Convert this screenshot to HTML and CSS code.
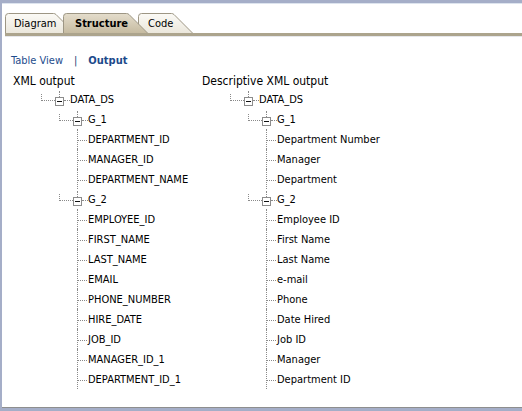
FILE: index.html
```html
<!DOCTYPE html>
<html>
<head>
<meta charset="utf-8">
<link rel="stylesheet" href="styles.css">
</head>
<body>
<div class="frame">
  <div class="panel">
    <div class="tabs">
      <div class="tab tab-diagram">
        <svg class="tab-bg" width="70" height="20" viewBox="0 0 70 20"><defs><linearGradient id="gu" x1="0" y1="0" x2="0" y2="1"><stop offset="0" stop-color="#fbfaf6"/><stop offset="1" stop-color="#ebe7dc"/></linearGradient></defs><path d="M0.5,20 V3.5 Q0.5,0.5 3.5,0.5 H48.5 Q50,0.5 51,1.5 L69.5,20 Z" fill="url(#gu)"/><path d="M0.5,20 V3.5 Q0.5,0.5 3.5,0.5 H48.5 Q50,0.5 51,1.5 L69.5,20" fill="none" stroke="#9d9684"/></svg>
        <span class="tab-label">Diagram</span>
      </div>
      <div class="tab tab-structure">
        <svg class="tab-bg" width="85" height="20" viewBox="0 0 85 20"><defs><linearGradient id="gs" x1="0" y1="0" x2="0" y2="1"><stop offset="0" stop-color="#e4ddcc"/><stop offset="1" stop-color="#c6bba1"/></linearGradient></defs><path d="M0.5,20 V3.5 Q0.5,0.5 3.5,0.5 H63.5 Q65,0.5 66,1.5 L84.5,20 Z" fill="url(#gs)"/><path d="M0.5,20 V3.5 Q0.5,0.5 3.5,0.5 H63.5 Q65,0.5 66,1.5 L84.5,20" fill="none" stroke="#9d9684"/></svg>
        <span class="tab-label">Structure</span>
      </div>
      <div class="tab tab-code">
        <svg class="tab-bg" width="55" height="20" viewBox="0 0 55 20"><defs><linearGradient id="gc" x1="0" y1="0" x2="0" y2="1"><stop offset="0" stop-color="#fbfaf6"/><stop offset="1" stop-color="#ebe7dc"/></linearGradient></defs><path d="M0.5,20 V3.5 Q0.5,0.5 3.5,0.5 H33.5 Q35,0.5 36,1.5 L54.5,20 Z" fill="url(#gc)"/><path d="M0.5,20 V3.5 Q0.5,0.5 3.5,0.5 H33.5 Q35,0.5 36,1.5 L54.5,20" fill="none" stroke="#9d9684"/></svg>
        <span class="tab-label">Code</span>
      </div>
    </div>
    <div class="tabbar"></div>

    <div class="links">
      <span class="link">Table View</span>
      <span class="sep">|</span>
      <span class="link active">Output</span>
    </div>

    <div class="columns">
      <div class="col col-left">
        <div class="heading">XML output</div>
        <div class="tree">
          <div class="row folder lvl0"><span class="elbow"></span><span class="boxwrap"><span class="boxstub"></span><span class="box"></span></span><span class="link-line"></span><span class="label">DATA_DS</span></div>
          <div class="row folder lvl1"><span class="elbow"></span><span class="boxwrap"><span class="boxstub"></span><span class="box"></span></span><span class="link-line"></span><span class="label">G_1</span></div>
          <div class="row leaf"><span class="leafline"><span class="h"></span></span><span class="label">DEPARTMENT_ID</span></div>
          <div class="row leaf"><span class="leafline"><span class="h"></span></span><span class="label">MANAGER_ID</span></div>
          <div class="row leaf"><span class="leafline"><span class="h"></span></span><span class="label">DEPARTMENT_NAME</span></div>
          <div class="row folder lvl1"><span class="elbow"></span><span class="boxwrap"><span class="boxstub"></span><span class="box"></span></span><span class="link-line"></span><span class="label">G_2</span></div>
          <div class="row leaf"><span class="leafline"><span class="h"></span></span><span class="label">EMPLOYEE_ID</span></div>
          <div class="row leaf"><span class="leafline"><span class="h"></span></span><span class="label">FIRST_NAME</span></div>
          <div class="row leaf"><span class="leafline"><span class="h"></span></span><span class="label">LAST_NAME</span></div>
          <div class="row leaf"><span class="leafline"><span class="h"></span></span><span class="label">EMAIL</span></div>
          <div class="row leaf"><span class="leafline"><span class="h"></span></span><span class="label">PHONE_NUMBER</span></div>
          <div class="row leaf"><span class="leafline"><span class="h"></span></span><span class="label">HIRE_DATE</span></div>
          <div class="row leaf"><span class="leafline"><span class="h"></span></span><span class="label">JOB_ID</span></div>
          <div class="row leaf"><span class="leafline"><span class="h"></span></span><span class="label">MANAGER_ID_1</span></div>
          <div class="row leaf"><span class="leafline"><span class="h"></span></span><span class="label">DEPARTMENT_ID_1</span></div>
        </div>
      </div>
      <div class="col col-right">
        <div class="heading">Descriptive XML output</div>
        <div class="tree">
          <div class="row folder lvl0"><span class="elbow"></span><span class="boxwrap"><span class="boxstub"></span><span class="box"></span></span><span class="link-line"></span><span class="label">DATA_DS</span></div>
          <div class="row folder lvl1"><span class="elbow"></span><span class="boxwrap"><span class="boxstub"></span><span class="box"></span></span><span class="link-line"></span><span class="label">G_1</span></div>
          <div class="row leaf"><span class="leafline"><span class="h"></span></span><span class="label">Department Number</span></div>
          <div class="row leaf"><span class="leafline"><span class="h"></span></span><span class="label">Manager</span></div>
          <div class="row leaf"><span class="leafline"><span class="h"></span></span><span class="label">Department</span></div>
          <div class="row folder lvl1"><span class="elbow"></span><span class="boxwrap"><span class="boxstub"></span><span class="box"></span></span><span class="link-line"></span><span class="label">G_2</span></div>
          <div class="row leaf"><span class="leafline"><span class="h"></span></span><span class="label">Employee ID</span></div>
          <div class="row leaf"><span class="leafline"><span class="h"></span></span><span class="label">First Name</span></div>
          <div class="row leaf"><span class="leafline"><span class="h"></span></span><span class="label">Last Name</span></div>
          <div class="row leaf"><span class="leafline"><span class="h"></span></span><span class="label">e-mail</span></div>
          <div class="row leaf"><span class="leafline"><span class="h"></span></span><span class="label">Phone</span></div>
          <div class="row leaf"><span class="leafline"><span class="h"></span></span><span class="label">Date Hired</span></div>
          <div class="row leaf"><span class="leafline"><span class="h"></span></span><span class="label">Job ID</span></div>
          <div class="row leaf"><span class="leafline"><span class="h"></span></span><span class="label">Manager</span></div>
          <div class="row leaf"><span class="leafline"><span class="h"></span></span><span class="label">Department ID</span></div>
        </div>
      </div>
    </div>
  </div>
</div>
</body>
</html>
```

FILE: styles.css
```css
* { box-sizing: border-box; }
html, body { margin: 0; padding: 0; background: #ffffff; }
body {
  font-family: "DejaVu Sans Condensed", "DejaVu Sans", sans-serif;
  font-stretch: condensed;
  font-size: 11px;
  color: #000;
}
.frame {
  width: 522px;
  height: 411px;
  border-top: 3px solid #a5aec8;
  border-left: 2px solid #a5aec8;
  border-bottom: 3px solid #a5aec8;
  display: flex;
  flex-direction: column;
}
.panel {
  flex: 1;
  background: #fff;
  border-top: 1px solid #dde4ee;
  border-bottom: 1px solid #8e8e8e;
  display: flex;
  flex-direction: column;
}
.tabs {
  display: flex;
  margin-top: 9px;
  padding-left: 3px;
  height: 20px;
}
.tab {
  position: relative;
  height: 20px;
  line-height: 20px;
  flex: none;
  z-index: 1;
}
.tab-bg { position: absolute; left: 0; top: 0; display: block; }
.tab-label { position: relative; display: block; padding-top: 1px; }
.tab-diagram { width: 70px; padding-left: 9px; }
.tab-structure { width: 85px; padding-left: 12px; margin-left: -12px; z-index: 3; font-weight: bold; }
.tab-code { width: 55px; padding-left: 10px; margin-left: -10px; }
.tabbar {
  margin-left: 3px;
  height: 4px;
  background: #aca48d;
  border-bottom: 1px solid #e6e7eb;
}
.links {
  margin-top: 15px;
  padding-top: 1px;
  padding-left: 9px;
  line-height: 16px;
  height: 17px;
  color: #1e4d8d;
  display: flex;
}
.links .sep { margin-left: 11px; margin-right: 11px; color: #1a3f78; }
.links .active { font-weight: bold; color: #1c4a8b; }
.columns {
  margin-top: 2px;
  padding-left: 10px;
  display: flex;
}
.col-left { width: 189px; }
.col-right { flex: 1; }
.heading {
  font-size: 12px;
  line-height: 18px;
  height: 18px;
  padding-top: 1px;
  padding-left: 1px;
}
.row {
  height: 20px;
  display: flex;
  align-items: flex-start;
}
.row .label { line-height: 20px; padding-top: 1px; white-space: nowrap; }
.folder.lvl0 { padding-left: 29px; }
.folder.lvl1 { padding-left: 47px; }
.leaf { padding-left: 65px; }
.elbow {
  width: 14px;
  height: 7px;
  margin-top: 5px;
  border-left: 1px dotted #8a8a8a;
  border-bottom: 1px dotted #8a8a8a;
  flex: none;
}
.boxwrap {
  width: 9px;
  display: flex;
  flex-direction: column;
  flex: none;
}
.boxstub {
  margin-top: 2px;
  margin-left: 4px;
  height: 6px;
  border-left: 1px dotted #8a8a8a;
}
.box {
  width: 9px;
  height: 9px;
  border: 1px solid #8c8c8c;
  background: #fff;
  display: flex;
  align-items: center;
  justify-content: center;
}
.box::after {
  content: "";
  width: 5px;
  height: 1px;
  background: #111;
}
.link-line {
  width: 6px;
  margin-top: 11px;
  border-top: 1px dotted #8a8a8a;
  flex: none;
}
.leafline {
  width: 11px;
  height: 20px;
  border-left: 1px dotted #8a8a8a;
  flex: none;
  display: flex;
  flex-direction: column;
}
.leafline .h {
  margin-top: 11px;
  width: 9px;
  border-top: 1px dotted #8a8a8a;
}
```
